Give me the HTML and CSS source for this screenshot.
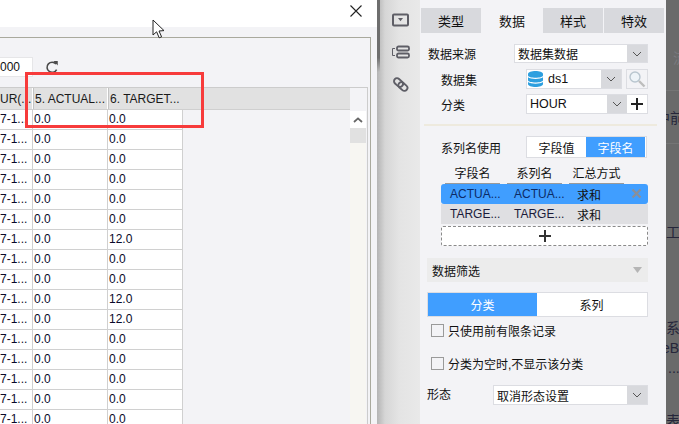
FILE: index.html
```html
<!DOCTYPE html>
<html lang="zh">
<head>
<meta charset="utf-8">
<title>数据</title>
<link rel="stylesheet" href="styles.css">
</head>
<body>
<div class="screen">
  <section class="dialog">
    <header class="dialog-head">
      <svg class="close" width="12" height="12" viewBox="0 0 12 12"><path d="M.5.5l11 11M11.500.5l-11 11" stroke="#222" stroke-width="1.100" fill="none"/></svg>
    </header>
    <div class="dialog-gap"></div>
    <div class="dialog-body">
      <div class="toolbar">
        <div class="limit">000</div>
        <svg class="refresh" width="14" height="14" viewBox="0 0 16 16"><path d="M12.600 4.600A5.800 5.800 0 1 0 13.300 11" stroke="#4a4a4a" stroke-width="1.800" fill="none"/><path d="M9.600 1.200h5v5z" fill="#4a4a4a"/></svg>
      </div>
      <div class="grid-box">
        <div class="grid-main">
          <div class="grid-head">
            <div class="hc hc-first">UR(...</div>
            <div class="hc">5. ACTUAL...</div>
            <div class="hc">6. TARGET...</div>
          </div>
          <div class="grid-rows">
            <div class="row"><div class="c c-first">7-1...</div><div class="c">0.0</div><div class="c">0.0</div></div>
            <div class="row"><div class="c c-first">7-1...</div><div class="c">0.0</div><div class="c">0.0</div></div>
            <div class="row"><div class="c c-first">7-1...</div><div class="c">0.0</div><div class="c">0.0</div></div>
            <div class="row"><div class="c c-first">7-1...</div><div class="c">0.0</div><div class="c">0.0</div></div>
            <div class="row"><div class="c c-first">7-1...</div><div class="c">0.0</div><div class="c">0.0</div></div>
            <div class="row"><div class="c c-first">7-1...</div><div class="c">0.0</div><div class="c">0.0</div></div>
            <div class="row"><div class="c c-first">7-1...</div><div class="c">0.0</div><div class="c">12.0</div></div>
            <div class="row"><div class="c c-first">7-1...</div><div class="c">0.0</div><div class="c">0.0</div></div>
            <div class="row"><div class="c c-first">7-1...</div><div class="c">0.0</div><div class="c">0.0</div></div>
            <div class="row"><div class="c c-first">7-1...</div><div class="c">0.0</div><div class="c">12.0</div></div>
            <div class="row"><div class="c c-first">7-1...</div><div class="c">0.0</div><div class="c">12.0</div></div>
            <div class="row"><div class="c c-first">7-1...</div><div class="c">0.0</div><div class="c">0.0</div></div>
            <div class="row"><div class="c c-first">7-1...</div><div class="c">0.0</div><div class="c">0.0</div></div>
            <div class="row"><div class="c c-first">7-1...</div><div class="c">0.0</div><div class="c">0.0</div></div>
            <div class="row"><div class="c c-first">7-1...</div><div class="c">0.0</div><div class="c">0.0</div></div>
            <div class="row"><div class="c c-first">7-1...</div><div class="c">0.0</div><div class="c">0.0</div></div>
          </div>
        </div>
        <div class="scrollbar">
          <div class="sb-head"></div>
          <div class="sb-up"><svg width="10" height="6" viewBox="0 0 10 6"><path d="M1 5l4-3.600L9 5" stroke="#666" stroke-width="1.800" fill="none"/></svg></div>
          <div class="sb-thumb"></div>
          <div class="sb-track"></div>
        </div>
      </div>
    </div>
    <div class="marker"></div>
    <svg class="cursor" width="14" height="20" viewBox="0 0 14 20"><path d="M1 1v15l3.600-3.200 2.600 6 2.400-1-2.600-5.800 5-.4z" fill="#fff" stroke="#222" stroke-width="1"/></svg>
  </section>

  <nav class="rail">
    <svg class="rail-icon" width="17" height="14" viewBox="0 0 17 14"><rect x="1" y="1.500" width="15" height="11" rx="1" fill="none" stroke="#5e5e66" stroke-width="2"/><path d="M6 5h5L8.500 8.200z" fill="#5e5e66"/></svg>
    <svg class="rail-icon" width="19" height="14" viewBox="0 0 19 14"><path d="M4 3.500H1.500v7H4" fill="none" stroke="#5e5e66" stroke-width="1"/><rect x="6" y="1.500" width="12" height="4" rx="1.500" fill="none" stroke="#5e5e66" stroke-width="1.800"/><rect x="6" y="8.500" width="12" height="4" rx="1.500" fill="none" stroke="#5e5e66" stroke-width="1.800"/></svg>
    <svg class="rail-icon link" width="17" height="17" viewBox="0 0 17 17"><g fill="none" stroke="#5e5e66" stroke-width="1.900"><rect x="0" y="-3" width="10" height="6" rx="3" transform="translate(2.800 3.200) rotate(42)"/><rect x="0" y="-3" width="10" height="6" rx="3" transform="translate(7.200 7.200) rotate(42)"/></g></svg>
  </nav>

  <aside class="panel">
    <div class="tabs">
      <div class="tab">类型</div>
      <div class="tab tab-on">数据</div>
      <div class="tab">样式</div>
      <div class="tab">特效</div>
    </div>

    <div class="form-row r1">
      <span class="lbl lbl-source">数据来源</span>
      <div class="select s-source"><span class="sel-text">数据集数据</span><span class="arrow"><svg width="10" height="6" viewBox="0 0 10 6"><path d="M1 1l4 4 4-4" stroke="#555" fill="none"/></svg></span></div>
    </div>
    <div class="form-row r2">
      <span class="lbl lbl-sub">数据集</span>
      <div class="select s-ds">
        <svg class="db" width="15" height="16" viewBox="0 0 15 16"><path d="M0 3c0-4 15-4 15 0v1.500c0 3-15 3-15 0z" fill="#2d9fdf"/><path d="M0 6.300c3 2.300 12 2.300 15 0v3c0 3-15 3-15 0z" fill="#2d9fdf"/><path d="M0 11c3 2.300 12 2.300 15 0v2c0 4-15 4-15 0z" fill="#2d9fdf"/></svg>
        <span class="sel-text latin">ds1</span>
        <span class="arrow"><svg width="10" height="6" viewBox="0 0 10 6"><path d="M1 1l4 4 4-4" stroke="#555" fill="none"/></svg></span>
      </div>
      <div class="search"><svg width="18" height="18" viewBox="0 0 18 18"><circle cx="7" cy="7" r="5" fill="#eef4f8" stroke="#b9c6cf" stroke-width="1.400"/><path d="M11 11l5.500 5.500" stroke="#bdbdbd" stroke-width="2.400"/></svg></div>
    </div>
    <div class="form-row r3">
      <span class="lbl lbl-sub">分类</span>
      <div class="select s-cat">
        <span class="sel-text latin">HOUR</span>
        <span class="arrow"><svg width="10" height="6" viewBox="0 0 10 6"><path d="M1 1l4 4 4-4" stroke="#555" fill="none"/></svg></span>
        <span class="plus"><svg width="12" height="12" viewBox="0 0 12 12"><path d="M6 0v12M0 6h12" stroke="#222" stroke-width="2"/></svg></span>
      </div>
    </div>
    <div class="divider"></div>

    <div class="form-row r4">
      <span class="lbl lbl-sub">系列名使用</span>
      <div class="toggle"><span class="tg">字段值</span><span class="tg tg-on">字段名</span></div>
    </div>

    <div class="fields-head">
      <span class="fh fh1">字段名</span><span class="fh fh2">系列名</span><span class="fh fh3">汇总方式</span>
    </div>
    <div class="field field-on">
      <span class="fc fc1">ACTUA...</span><span class="fc fc2">ACTUA...</span><span class="fc fc3">求和</span>
      <svg class="del" width="11" height="11" viewBox="0 0 11 11"><path d="M1.500 1.500l8 8M9.500 1.500l-8 8" stroke="#8a8f98" stroke-width="2.200"/></svg>
    </div>
    <div class="field">
      <span class="fc fc1">TARGE...</span><span class="fc fc2">TARGE...</span><span class="fc fc3">求和</span>
    </div>
    <div class="add-field"><svg width="12" height="12" viewBox="0 0 12 12"><path d="M6 0v12M0 6h12" stroke="#333" stroke-width="2"/></svg></div>

    <div class="filter-bar"><span>数据筛选</span><svg width="9" height="6" viewBox="0 0 9 6"><path d="M0 0h9L4.500 6z" fill="#b5b5b5"/></svg></div>

    <div class="seg"><span class="seg-item seg-on">分类</span><span class="seg-item">系列</span></div>

    <label class="check c1"><span class="box"></span>只使用前有限条记录</label>
    <label class="check c2"><span class="box"></span>分类为空时,不显示该分类</label>

    <div class="form-row r5">
      <span class="lbl lbl-shape">形态</span>
      <div class="select s-shape"><span class="sel-text">取消形态设置</span><span class="arrow"><svg width="10" height="6" viewBox="0 0 10 6"><path d="M1 1l4 4 4-4" stroke="#555" fill="none"/></svg></span></div>
    </div>
  </aside>

  <div class="backdrop">
    <span class="bd bd1">流</span>
    <span class="bd bd2">中前</span>
    <span class="bd bd3">工</span>
    <span class="bd bd4">系</span>
    <span class="bd bd5">eB</span>
    <span class="bd bd6">...</span>
    <span class="bd bd7">表</span>
    <i class="bd-line bl1"></i>
    <i class="bd-line bl2"></i>
  </div>
</div>
</body>
</html>
```

FILE: styles.css
```css
* { box-sizing: border-box; }
html, body { margin: 0; padding: 0; }
body {
  width: 679px;
  height: 424px;
  overflow: hidden;
  font-family: "Liberation Sans", "Noto Sans CJK SC", sans-serif;
  font-size: 12px;
  color: #111;
}
.screen { display: flex; width: 679px; height: 424px; overflow: hidden; }

/* left dialog */
.dialog { position: relative; width: 377px; flex: none; background: #f3f3f6; display: flex; flex-direction: column; }
.dialog-head { height: 27px; background: #fff; display: flex; justify-content: flex-end; padding: 5px 15px 0 0; }
.close { display: block; }
.dialog-gap { height: 10px; flex: none; }
.dialog-body { flex: 1; width: 371px; border-top: 1px solid #a9a99d; border-right: 1px solid #a9a99d; display: flex; flex-direction: column; min-height: 0; padding-right: 2px; }
.toolbar { height: 49px; flex: none; display: flex; align-items: flex-start; padding-top: 19px; }
.limit { width: 33px; height: 20px; background: #fff; border: 1px solid #e6e6e8; border-left: 0; font-size: 12px; line-height: 19px; text-align: right; padding-right: 13px; }
.refresh { margin: 3px 0 0 12px; }
.grid-box { flex: 1; min-height: 0; display: flex; border-top: 1px solid #ccc; border-right: 1px solid #ccc; overflow: hidden; }
.grid-main { width: 350px; flex: none; }
.grid-head { display: flex; height: 22px; background: #e1e1e1; border-bottom: 1px solid #cfcfcf; }
.hc { width: 75px; padding-left: 2px; line-height: 22px; border-left: 1px solid #fff; box-shadow: inset 1px 0 0 #c4c4c4; white-space: nowrap; color: #1a1a1a; font-size: 12px; }
.hc-first { width: 32px; border-left: 0; box-shadow: none; padding-left: 0; text-align: right; padding-right: 8px; }
.row { display: flex; height: 20px; }
.c { width: 75px; height: 20px; padding-left: 1px; background: #fff; border-right: 1px solid #d0d0d0; border-bottom: 1px solid #d0d0d0; line-height: 19px; color: #0a0a2a; font-size: 12px; white-space: nowrap; }
.c-first { width: 33px; padding-left: 0; padding-right: 8px; text-align: right; }
.scrollbar { width: 16px; flex: none; display: flex; flex-direction: column; }
.sb-head { height: 23px; flex: none; }
.sb-up { height: 17px; flex: none; background: #fff; display: flex; align-items: center; justify-content: center; }
.sb-thumb { height: 15px; flex: none; background: #e1e1e1; }
.sb-track { flex: 1; background: #f7f6f2; }
.marker { position: absolute; left: 25px; top: 72px; width: 179px; height: 56px; border: 3px solid #f73b3b; }
.cursor { position: absolute; left: 152px; top: 19px; }

/* icon rail */
.rail { position: relative; width: 43px; flex: none; display: flex; flex-direction: column; align-items: center; gap: 18px; padding: 13px 0 0 3px; background: linear-gradient(90deg, #b4b4b4 0, #d6d6d6 8px, #e4e4e4 22px, #e9e9e9 100%); }
.rail::before { content: ""; position: absolute; left: 0; top: 0; width: 3px; height: 72px; background: linear-gradient(180deg, #6e6e6e 80%, rgba(110,110,110,0)); }
.rail-icon { display: block; flex: none; }
.link { margin-top: -1px; }

/* property panel */
.panel { width: 246px; flex: none; background: #f3f3f6; padding-top: 8px; }
.tabs { display: flex; height: 25px; margin-left: 1px; gap: 1px; width: 243px; }
.tab { flex: 1; background: #d8d9dd; display: flex; align-items: center; justify-content: center; font-size: 13px; }
.tab-on { background: #f3f3f6; }
.form-row { display: flex; align-items: center; position: relative; }
.r1 { margin-top: 11px; height: 19px; }
.r2 { margin-top: 6px; height: 20px; }
.r3 { margin-top: 5px; height: 20px; }
.r4 { margin-top: 10px; height: 22px; }
.r5 { margin-top: 15px; height: 20px; }
.lbl { white-space: nowrap; flex: none; }
.lbl-source { width: 94px; padding-left: 8px; }
.lbl-sub { width: 106px; padding-left: 21px; }
.lbl-shape { width: 73px; padding-left: 7px; position: relative; top: -2px; }
.select { display: flex; align-items: center; height: 100%; background: #fff; border: 1px solid #dcdde2; flex: none; }
.sel-text { flex: 1; padding-left: 3px; white-space: nowrap; }
.arrow { width: 20px; height: 100%; flex: none; background: #d8d9dd; display: flex; align-items: center; justify-content: center; }
.s-source { width: 134px; }
.s-ds { width: 96px; }
.s-ds .sel-text { padding-left: 5px; }
.s-cat { width: 122px; }
.s-shape { width: 155px; }
.latin { font-size: 12.500px; color: #111; }
.db { margin-left: 1px; flex: none; }
.search { width: 22px; height: 100%; margin-left: 4px; border: 1px solid #dcdde2; display: flex; align-items: center; justify-content: center; background: #f3f3f6; }
.plus { width: 20px; flex: none; height: 100%; display: flex; align-items: center; justify-content: center; }
.divider { height: 2px; margin: 10px 9px 0 4px; background: #eeeade; }
.toggle { display: flex; width: 121px; height: 100%; border: 1px solid #dcdde2; background: #fff; }
.tg { width: 59px; display: flex; align-items: center; justify-content: center; }
.tg-on { background: #409eff; color: #fff; }
.fields-head { position: relative; display: flex; height: 18px; margin-top: 8px; margin-left: 25px; }
.fh { display: block; height: 18px; border-bottom: 1px solid #9a9a9a; text-align: center; line-height: 16px; flex: none; }
.fh1 { width: 55px; }
.fh2 { width: 55px; margin-left: 7px; }
.fh3 { width: 55px; margin-left: 7px; white-space: nowrap; }
.field { position: relative; display: flex; align-items: center; height: 20px; width: 207px; margin-left: 21px; background: #dfdfe2; color: #1b1b3a; }
.field-on { background: #409eff; border-radius: 3px; color: #0c2b66; }
.fc { display: block; flex: none; white-space: nowrap; }
.fc1 { width: 73px; padding-left: 9px; }
.fc2 { width: 63px; }
.fc3 { color: #111; }
.del { position: absolute; left: 190px; top: 4px; }
.add-field { width: 207px; height: 20px; margin: 2px 0 0 21px; background: #fff; border: 1px dashed #8a8a8a; border-radius: 2px; display: flex; align-items: center; justify-content: center; }
.filter-bar { display: flex; align-items: center; justify-content: space-between; width: 221px; height: 24px; margin: 12px 0 0 7px; padding: 0 6px 0 5px; background: #ececec; }
.seg { display: flex; width: 221px; height: 25px; margin: 10px 0 0 7px; border: 1px solid #dcdde2; background: #fff; }
.seg-item { width: 109px; display: flex; align-items: center; justify-content: center; flex: none; }
.seg-on { background: #409eff; color: #fff; }
.check { display: flex; align-items: center; margin-left: 11px; height: 13px; white-space: nowrap; }
.c1 { margin-top: 7px; }
.c2 { margin-top: 20px; }
.box { width: 13px; height: 13px; margin-right: 4px; background: #f3f3f6; border: 1px solid #9a9a9a; flex: none; }

/* dimmed page behind */
.backdrop { position: relative; flex: 1; background: #6a6a6a; overflow: hidden; }
.bd { position: absolute; color: #26263a; white-space: nowrap; left: 0; font-size: 14px; line-height: 20px; }
.bd1 { left: 7px; top: 48px; color: #7a7a80; }
.bd2 { top: 108px; left: -10px; }
.bd3 { top: 222px; }
.bd4 { top: 318px; }
.bd5 { top: 338px; left: -4px; }
.bd6 { top: 358px; left: 2px; }
.bd7 { top: 411px; }
.bd-line { position: absolute; left: 0; right: 0; height: 1px; background: #757575; }
.bl1 { top: 90px; }
.bl2 { top: 143px; }
```
